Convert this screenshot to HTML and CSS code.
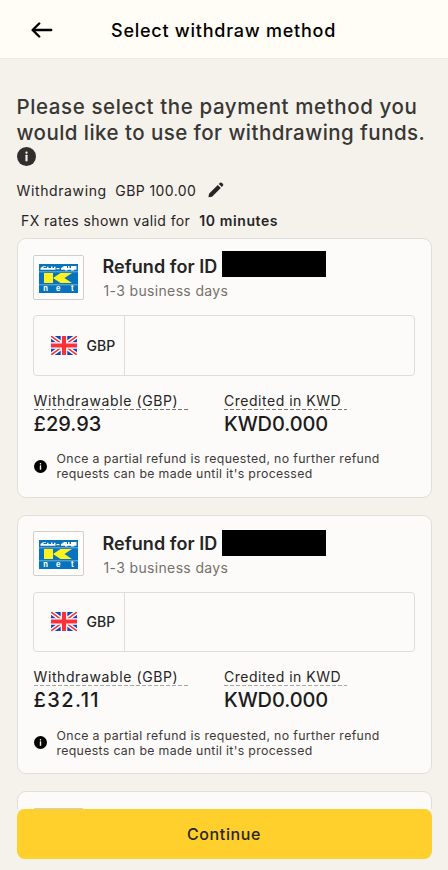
FILE: index.html
```html
<!DOCTYPE html>
<html lang="en">
<head>
<meta charset="utf-8">
<title>Select withdraw method</title>
<link rel="stylesheet" href="styles.css">
</head>
<body>
<svg class="defs" aria-hidden="true">
  <symbol id="info" viewBox="0 0 18 18"><circle cx="9" cy="9" r="9"/><rect class="cut" x="8" y="4.3" width="2" height="2" rx=".6"/><rect class="cut" x="8" y="7.4" width="2" height="6.2" rx=".4"/></symbol>
  <symbol id="flag" viewBox="0 0 26 19">
    <rect width="26" height="19" fill="#1644b8"/>
    <path d="M0 0L26 19M26 0L0 19" stroke="#fff" stroke-width="4.4"/>
    <path d="M0 0L26 19M26 0L0 19" stroke="#fb3038" stroke-width="1.5"/>
    <path d="M13 0V19M0 9.5H26" stroke="#fff" stroke-width="6.6"/>
    <path d="M13 0V19M0 9.5H26" stroke="#fb3038" stroke-width="4.2"/>
  </symbol>
  <symbol id="knet" viewBox="0 0 39 29">
    <rect width="39" height="29" fill="#0873bd"/>
    <path d="M1.5 5.8V4L4 2.2H7V3H4.5V4H8V2.8H9.5V4H12V2.4H13.5V4H15V2.8H16.5V5.8ZM17.5 4H20.5V5.2H17.5ZM22 5.8V4.2L25 2H28V4H29V2H30.5V4H32V2H37.5V5.8H35V6.6H32V5.8H28.5V6.6H26V5.8Z" fill="#fff"/>
    <path d="M0 7.8H39M0 20.8H39" stroke="#8bc4e5" stroke-width=".8"/>
    <path d="M5 9H14V19H5ZM14 14L21.5 9H33L25.5 14L33 19H21.5Z" fill="#fff21d"/>
  </symbol>
</svg>
<header class="bar">
  <svg class="back" viewBox="0 0 22 16"><path d="M20.2 8H2M8.2 1.5L1.6 8L8.2 14.5"/></svg>
  <h1><span class="t-title">Select withdraw method</span></h1>
</header>
<main class="content">
  <h2><span class="t-h1">Please select the payment method you</span><br><span class="t-h2">would like to use for withdrawing funds.</span></h2>
  <svg class="info-big"><use href="#info"/></svg>
  <div class="amount"><span class="t-wd">Withdrawing</span><span class="t-amt">GBP 100.00</span>
    <svg class="pencil" viewBox="0 0 16 16"><path d="M.5 15.3L1 11.8L9.8 3L12.8 6L4 14.8ZM10.8 2L12 .8Q13 0 14 .9L15 1.9Q15.7 2.8 14.9 3.8L13.8 5Z"/></svg>
  </div>
  <div class="rates"><span class="t-fx">FX rates shown valid for</span><b>10 minutes</b></div>
  <section class="card">
    <div class="head">
      <div class="logo"><svg viewBox="0 0 39 29"><use href="#knet"/><text x="4.3" y="27">n</text><text x="17" y="27">e</text><text x="32" y="27">t</text></svg></div>
      <div><h3><span class="t-ref">Refund for ID</span><span class="redacted"></span></h3><p class="days"><span class="t-days">1-3 business days</span></p></div>
    </div>
    <div class="field"><div class="cur"><svg><use href="#flag"/></svg><span class="t-gbp">GBP</span></div></div>
    <div class="sums">
      <div><div class="label l1"><span class="t-l1">Withdrawable (GBP)</span></div><div class="value"><span class="t-v1">£29.93</span></div></div>
      <div><div class="label l2"><span class="t-l2">Credited in KWD</span></div><div class="value"><span class="t-v2">KWD0.000</span></div></div>
    </div>
    <div class="note"><svg><use href="#info"/></svg><p><span class="t-n1">Once a partial refund is requested, no further refund</span><br><span class="t-n2">requests can be made until it's processed</span></p></div>
  </section>
  <section class="card second">
    <div class="head">
      <div class="logo"><svg viewBox="0 0 39 29"><use href="#knet"/><text x="4.3" y="27">n</text><text x="17" y="27">e</text><text x="32" y="27">t</text></svg></div>
      <div><h3><span class="t-ref">Refund for ID</span><span class="redacted"></span></h3><p class="days"><span class="t-days">1-3 business days</span></p></div>
    </div>
    <div class="field"><div class="cur"><svg><use href="#flag"/></svg><span class="t-gbp">GBP</span></div></div>
    <div class="sums">
      <div><div class="label l1"><span class="t-l1">Withdrawable (GBP)</span></div><div class="value"><span class="t-v1 wide">£32.11</span></div></div>
      <div><div class="label l2"><span class="t-l2">Credited in KWD</span></div><div class="value"><span class="t-v2">KWD0.000</span></div></div>
    </div>
    <div class="note"><svg><use href="#info"/></svg><p><span class="t-n1">Once a partial refund is requested, no further refund</span><br><span class="t-n2">requests can be made until it's processed</span></p></div>
  </section>
  <section class="card"><div class="head"><div class="logo"></div></div></section>
</main>
<footer><button><span class="t-btn">Continue</span></button></footer>
</body>
</html>
```
FILE: styles.css
```css
* { box-sizing: border-box; }
body { margin: 0; height: 870px; overflow: hidden; display: flex; flex-direction: column; background: #f5f1eb; color: #252525; font-family: Inter, "Liberation Sans", sans-serif; }
h1, h2, h3, p { margin: 0; }
span { white-space: nowrap; }
svg { display: block; flex: none; }
.defs { position: absolute; width: 0; height: 0; }
.cut { fill: #f5f1eb; }
.bar { flex: none; height: 59px; display: grid; grid-template-columns: 111px 1fr; align-items: center; background: #fffdf6; border-bottom: 1px solid #ebe9e5; }
.back { width: 22px; height: 16px; margin: 1px 0 0 31px; fill: none; stroke: #000; stroke-width: 2.4; stroke-linecap: round; stroke-linejoin: round; }
h1 { font-size: 18px; line-height: 24px; font-weight: 500; color: #000; padding-top: 3px; }
.content { flex: none; height: 750px; overflow: hidden; padding: 35px 16.5px 0; }
h2 { font-size: 20.5px; line-height: 26px; font-weight: 500; color: #383735; }
.info-big { width: 19px; height: 19px; margin-top: 1px; fill: #302f2e; }
.info-big, .note svg { overflow: visible; }
.amount { display: flex; align-items: center; height: 20px; margin-top: 14px; font-size: 14px; }
.t-amt { margin-left: 8.5px; }
.pencil { width: 16px; height: 16px; margin-left: 11.5px; fill: #252525; }
.rates { display: flex; height: 20px; margin-top: 11px; padding-left: 4.5px; font-size: 14px; line-height: 20px; }
.rates b { margin-left: 9px; font-weight: 600; letter-spacing: .6px; }
.card { height: 259px; margin: 0 0 17.6px; padding: 16px 16px 0 15px; border: 1px solid #e1dfdc; border-radius: 9px; background: #fcfbf9; }
.rates + .card { height: 260px; margin: 7px 0 16.6px; }
.second { padding-top: 15px; }
.second .head { height: 61px; }
.head { display: flex; gap: 19px; height: 60px; }
.logo { width: 51px; height: 45px; border: 1px solid #d2cfca; border-radius: 2px; padding: 8px 5px; background: #fefdfc; }
.logo svg { width: 39px; height: 29px; }
.logo text { font: 700 7.5px Inter, sans-serif; fill: #fff; }
h3 { display: flex; height: 26px; margin-top: -4px; font-size: 18px; line-height: 31px; font-weight: 600; align-items: flex-start; }
.redacted { width: 104px; height: 26px; margin-left: 4.5px; background: #000; }
.days { font-size: 14px; line-height: 20px; color: #74716e; padding: 4px 0 0 1px; }
.second h3 { margin-top: -1px; line-height: 27px; }
.second .days { padding-top: 2px; }
.field { height: 61px; border: 1px solid #dfddda; border-radius: 4px; }
.cur { width: 91px; height: 59px; display: flex; align-items: center; gap: 10px; padding-left: 17px; border-right: 1px solid #dfddda; font-size: 14px; font-weight: 500; }
.cur svg { width: 26px; height: 19px; }
.sums { display: grid; grid-template-columns: 190.5px 1fr; margin: 14px 0 0 1px; }
.second .field { height: 60px; }
.second .cur { height: 58px; }
.label { height: 20px; padding-top: 1px; font-size: 14px; line-height: 19px; background: repeating-linear-gradient(90deg, #77746f 0 4px, transparent 4px 6px) bottom / 100% 1px no-repeat; }
.second .label { background-image: repeating-linear-gradient(90deg, #aaa7a3 0 4px, transparent 4px 6px); }
.l1 { width: 154px; }
.l2 { width: 123px; }
.value { font-size: 20px; line-height: 28px; font-weight: 500; color: #1c1c1c; }
.note { display: flex; align-items: center; gap: 9.5px; margin-top: 13px; font-size: 12.3px; line-height: 15px; color: #3c3a38; }
.second .note { margin-top: 14px; }
.note svg { width: 13px; height: 13px; margin-left: 1.5px; fill: #000; }
footer { padding: 0 16.5px; }
button { width: 100%; height: 50px; padding: 0; border: 0; border-radius: 8px; background: #ffcf2b; color: #282622; font: 500 16px Inter, sans-serif; }

/* Tracking per text run */
.t-title { letter-spacing: .75px; }
.t-h1 { letter-spacing: .6px; }
.t-h2 { letter-spacing: .45px; }
.t-wd { letter-spacing: .62px; }
.t-amt { letter-spacing: .42px; }
.t-fx { letter-spacing: .4px; }
.t-ref { letter-spacing: .05px; }
.t-days { letter-spacing: .35px; }
.t-l1 { letter-spacing: .6px; }
.t-l2 { letter-spacing: .52px; }
.t-v2 { letter-spacing: -.1px; }
.wide { letter-spacing: 1.4px; }
.t-n1 { letter-spacing: .36px; }
.t-n2 { letter-spacing: .33px; }
.t-btn { letter-spacing: .6px; }
```
